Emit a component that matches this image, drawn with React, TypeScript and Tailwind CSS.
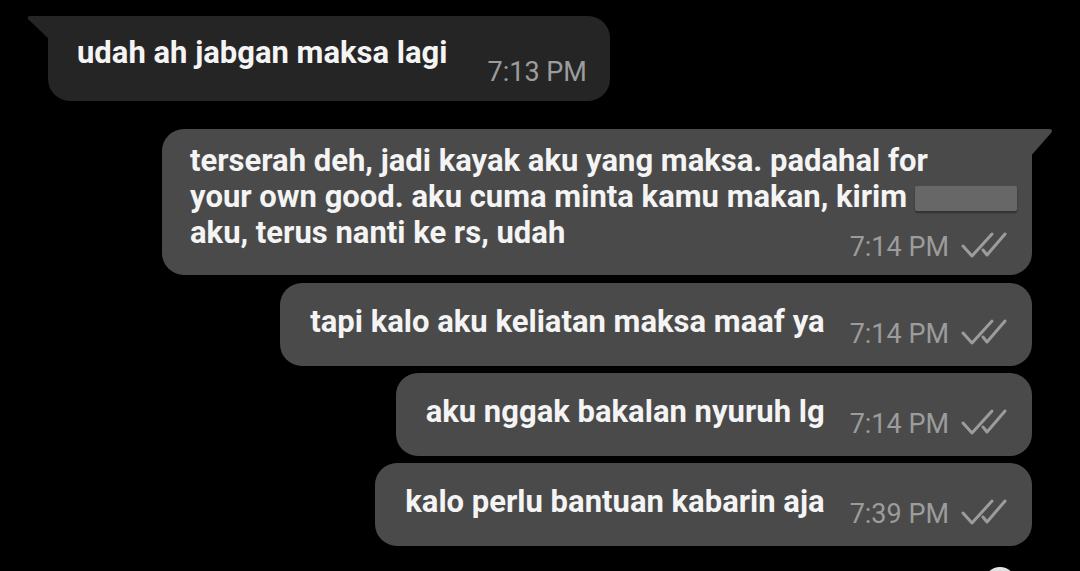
import React from "react";

const font = { fontFamily: "Roboto, 'Noto Sans', sans-serif" };

function Checks() {
  return (
    <svg width="48" height="28" viewBox="0 0 48 28" className="-mt-[1px] ml-[11px] shrink-0" fill="none">
      <path d="M3 15 L12 25 L32 3" stroke="#9c9c9c" strokeWidth="3" strokeLinecap="round" strokeLinejoin="round" />
      <path d="M23 19 L27 24 L45 3" stroke="#9c9c9c" strokeWidth="3" strokeLinecap="round" strokeLinejoin="round" />
    </svg>
  );
}

function Time({ t, checks }: { t: string; checks?: boolean }) {
  return (
    <div className="flex items-start shrink-0">
      <span className="text-[27px] leading-[30px] text-[#9c9c9c] font-normal whitespace-nowrap">{t}</span>
      {checks && <Checks />}
    </div>
  );
}

function OutSingle({ text, t }: { text: string; t: string }) {
  return (
    <div className="self-end mr-[48px] bg-[#4a4a4a] rounded-[22px] flex items-start pl-[30px] pr-[24px] pt-[21px] pb-[17px]">
      <span className="text-[31px] leading-[36px] font-bold text-[#f4f4f4] whitespace-nowrap">{text}</span>
      <div className="ml-[25px] mt-[15px]">
        <Time t={t} checks />
      </div>
    </div>
  );
}

export default function App() {
  return (
    <div style={font} className="relative w-[1080px] h-[571px] bg-black overflow-hidden flex flex-col">
      {/* incoming */}
      <div className="relative self-start ml-[48px] mt-[16px] bg-[#252525] rounded-[22px] rounded-tl-none flex items-start pl-[29px] pr-[23px] pt-[19px] pb-[14px]">
        <svg className="absolute left-[-21px] top-0" width="24" height="26" viewBox="0 0 24 26">
          <path d="M3 0 L24 0 L24 25 L1.2 3.2 Q-0.5 0 3 0 Z" fill="#252525" />
        </svg>
        <span className="text-[31px] leading-[36px] font-bold text-[#f4f4f4] whitespace-nowrap">udah ah jabgan maksa lagi</span>
        <div className="ml-[40px] mt-[22px]">
          <Time t="7:13 PM" />
        </div>
      </div>

      {/* outgoing long */}
      <div className="relative self-end mr-[48px] mt-[28px] w-[870px] bg-[#4a4a4a] rounded-[22px] rounded-tr-none pl-[28px] pr-[10px] pt-[14px] pb-[13px] flex flex-col">
        <svg className="absolute right-[-21px] top-0" width="24" height="30" viewBox="0 0 24 30">
          <path d="M0 0 L20.5 0 Q24 0 22.5 3.5 L0 29 Z" fill="#4a4a4a" />
        </svg>
        <p className="text-[31px] leading-[36px] font-bold text-[#f4f4f4] whitespace-nowrap">
          terserah deh, jadi kayak aku yang maksa. padahal for
          <br />
          your own good. aku cuma minta kamu makan, kirim{" "}
          <span className="inline-block align-[-4px] w-[102px] h-[25px] bg-[#676767] rounded-[2px] shadow-[0_2px_2px_rgba(0,0,0,0.35)]" />
          <br />
          aku, terus nanti ke rs, udah
        </p>
        <div className="flex justify-end -mt-[19px] pr-[14px]">
          <Time t="7:14 PM" checks />
        </div>
      </div>

      <div className="mt-[8px] flex flex-col">
        <OutSingle text="tapi kalo aku keliatan maksa maaf ya" t="7:14 PM" />
      </div>
      <div className="mt-[7px] flex flex-col">
        <OutSingle text="aku nggak bakalan nyuruh lg" t="7:14 PM" />
      </div>
      <div className="mt-[7px] flex flex-col">
        <OutSingle text="kalo perlu bantuan kabarin aja" t="7:39 PM" />
      </div>

      {/* partially visible floating button */}
      <div className="absolute left-[984px] top-[567px] w-[32px] h-[32px] rounded-full bg-gradient-to-b from-[#e8e8e8] to-[#9a9a9a]" />
    </div>
  );
}
